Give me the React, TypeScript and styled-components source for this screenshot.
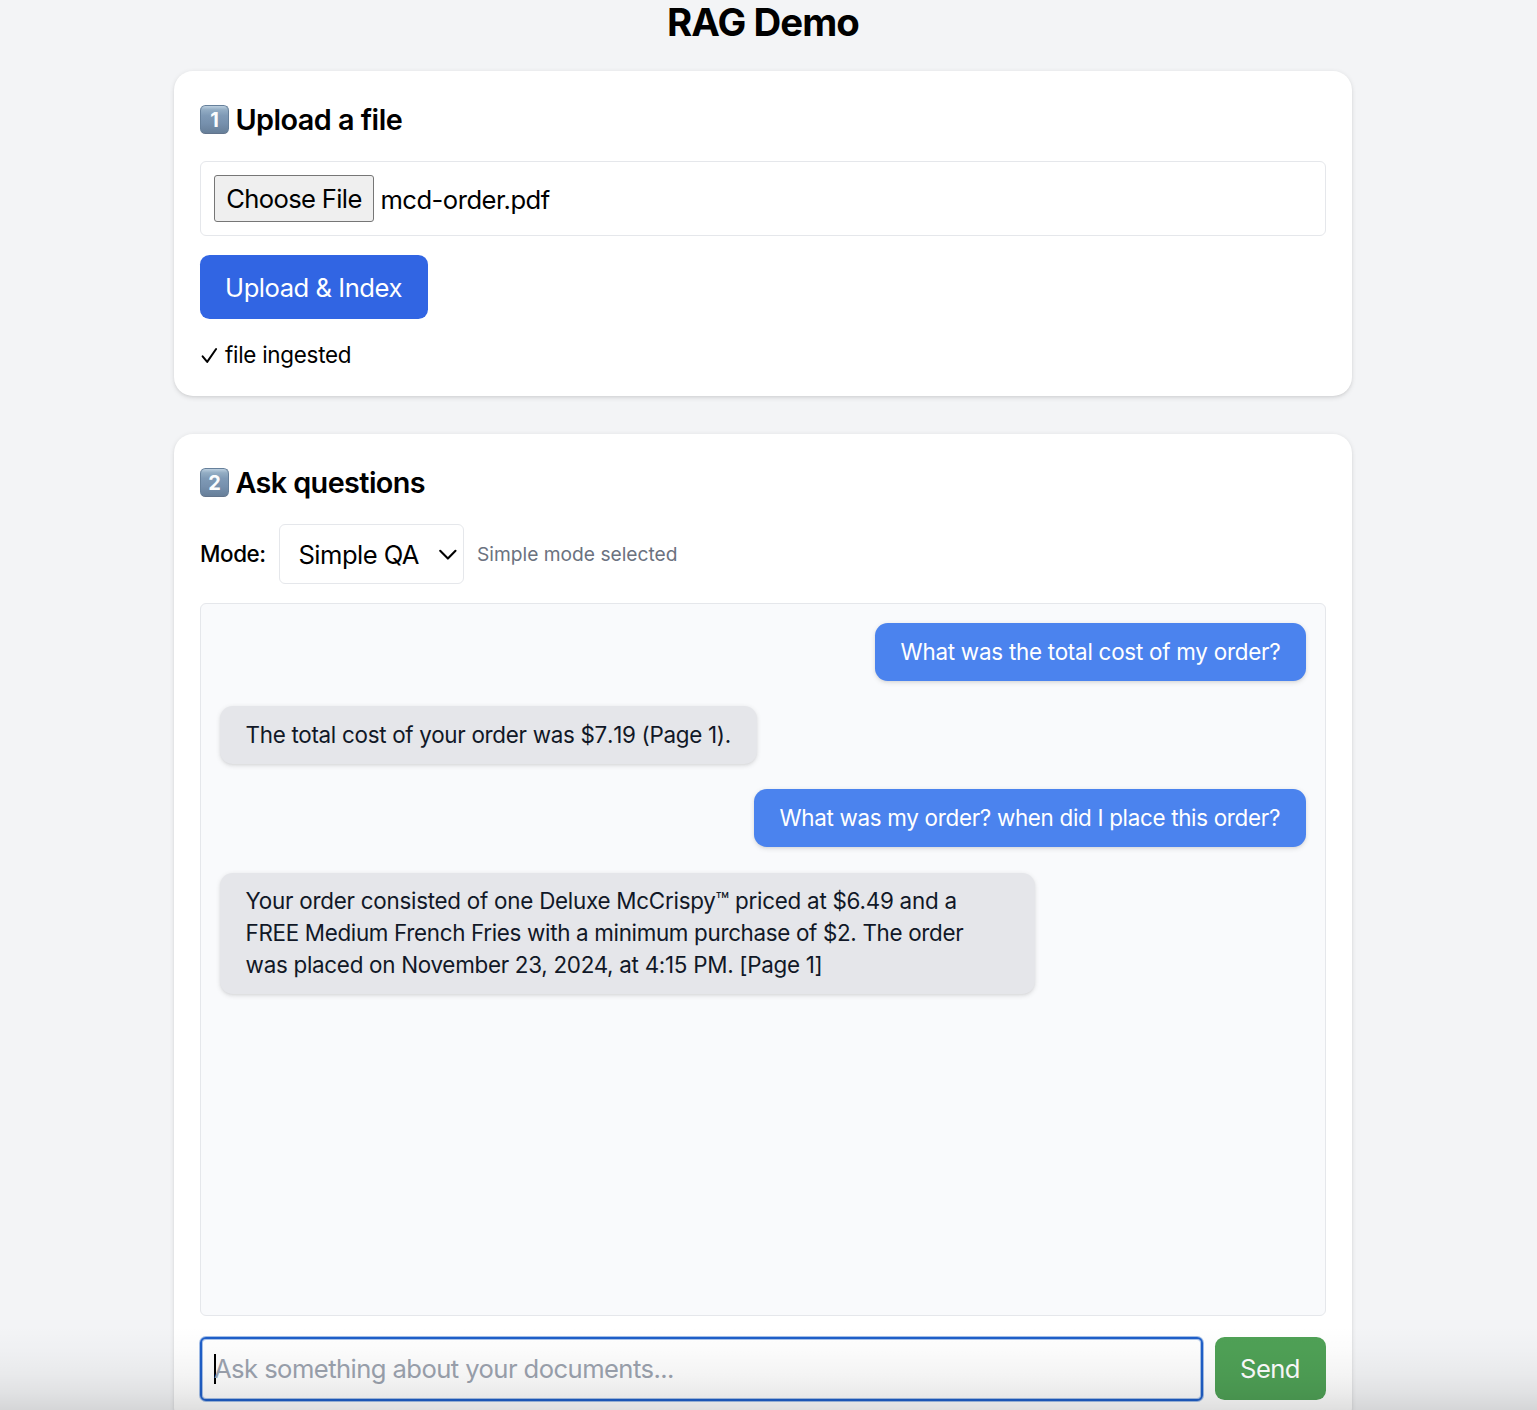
import React from 'react';
import styled, { createGlobalStyle } from 'styled-components';

const GlobalStyle = createGlobalStyle`
  *, *::before, *::after { box-sizing: border-box; }
  html, body { margin: 0; height: 1410px; overflow: hidden; }
  body {
    background: #f3f4f6;
    color: #000;
    font-family: Inter, "Liberation Sans", sans-serif;
    font-size: 25.6px;
    font-kerning: normal;
  }
  h1, h2, p { margin: 0; }
  button { font-family: inherit; }
`;

const Page = styled.main`
  position: relative;
  height: 1410px;
  overflow: hidden;
  padding: 0 185px 0 174px;
  display: flex;
  flex-direction: column;
`;

const Title = styled.h1`
  flex: none;
  height: 71px;
  text-align: center;
  font-size: 38.4px;
  line-height: 44px;
  font-weight: 700;
  letter-spacing: -0.92px;
`;

const Card = styled.section`
  flex: none;
  display: flex;
  flex-direction: column;
  align-items: flex-start;
  padding: 26px;
  border-radius: 19px;
  background: #fff;
  box-shadow: 0 1.6px 4.8px rgba(0, 0, 0, 0.1), 0 1.6px 3.2px -1.6px rgba(0, 0, 0, 0.1);

  & + & { margin-top: 38px; }
`;

const CardHeading = styled.h2<{ $track: number }>`
  display: flex;
  align-items: center;
  gap: 6.4px;
  height: 45px;
  margin-bottom: 19px;
  font-size: 28.8px;
  line-height: 45px;
  font-weight: 600;
  letter-spacing: ${(p) => p.$track}px;
`;

const Keycap = styled.span`
  display: flex;
  align-items: center;
  justify-content: center;
  width: 29px;
  height: 29px;
  margin-bottom: 1px;
  padding-top: 2px;
  border-radius: 5.5px;
  border: 1px solid #66809b;
  border-bottom-color: #62748c;
  background: linear-gradient(#bccfdf 0, #93adc4 14%, #7f9ab6 35%, #7690ad 65%, #677f99 100%);
  color: #fbfcfd;
  font-size: 20px;
  line-height: 1;
  font-weight: 650;
  letter-spacing: 0;
`;

const FileField = styled.div`
  display: flex;
  align-items: center;
  gap: 6.4px;
  width: 100%;
  height: 75px;
  padding: 0 13px;
  margin-bottom: 19px;
  border: 1px solid #e5e7eb;
  border-radius: 6px;
`;

const ChooseButton = styled.button`
  width: 160px;
  height: 47px;
  padding: 0;
  border: 1px solid #767676;
  border-radius: 3px;
  background: #efefef;
  color: #000;
  font-size: 25.6px;
  letter-spacing: -0.66px;
  white-space: nowrap;
`;

const FileName = styled.span`
  padding-top: 2px;
  letter-spacing: -0.5px;
`;

const ActionButton = styled.button<{ $bg: string; $width: number; $height: number; $track: number }>`
  flex: none;
  width: ${(p) => p.$width}px;
  height: ${(p) => p.$height}px;
  padding: 0 1px 0 0;
  border: 0;
  border-radius: 9.6px;
  background: ${(p) => p.$bg};
  color: #fff;
  font-size: 25.6px;
  letter-spacing: ${(p) => p.$track}px;
  white-space: nowrap;
`;

const Status = styled.p`
  display: flex;
  align-items: center;
  gap: 7px;
  height: 32px;
  margin-top: 19px;
  padding: 2px 0 0 1px;
  font-size: 22.4px;
  line-height: 30px;
  letter-spacing: -0.26px;
`;

const ModeRow = styled.div`
  display: flex;
  align-items: center;
  height: 60px;
  margin-bottom: 19px;
`;

const ModeLabel = styled.label`
  width: 79px;
  padding-bottom: 1px;
  font-size: 22.4px;
  font-weight: 500;
  letter-spacing: -0.4px;
`;

const ModeSelect = styled.div`
  display: flex;
  align-items: center;
  justify-content: space-between;
  width: 185px;
  height: 60px;
  padding: 0 6px 0 18.5px;
  border: 1px solid #e5e7eb;
  border-radius: 6px;
  letter-spacing: -0.55px;

  svg { margin-top: 2px; }
`;

const ModeHint = styled.span`
  margin-left: 13px;
  color: #6b7280;
  font-size: 19.2px;
`;

const Chat = styled.div`
  display: flex;
  flex-direction: column;
  align-items: flex-start;
  gap: 25.6px;
  width: 100%;
  height: 713px;
  margin-bottom: 20px;
  padding: 19px;
  border: 1px solid #e5e7eb;
  border-radius: 6px;
  background: #f9fafc;
`;

const Bubble = styled.div<{ $mine?: boolean; $width: number }>`
  align-self: ${(p) => (p.$mine ? 'flex-end' : 'flex-start')};
  width: ${(p) => p.$width}px;
  padding: 12.8px 0 12.8px 25.6px;
  border-radius: 12.8px;
  background: ${(p) => (p.$mine ? '#4b83ee' : '#e5e6ea')};
  color: ${(p) => (p.$mine ? '#fff' : '#111827')};
  font-size: 22.4px;
  line-height: 32px;
  white-space: nowrap;
  box-shadow: 0 1.6px 4.8px rgba(0, 0, 0, 0.1), 0 1.6px 3.2px -1.6px rgba(0, 0, 0, 0.1);
`;

const Line = styled.div<{ $track: number }>`
  letter-spacing: ${(p) => p.$track}px;
`;

const Amount = styled.span`
  font-kerning: none;
`;

const Composer = styled.div`
  display: flex;
  align-items: flex-start;
  gap: 12px;
  width: 100%;
  height: 64px;
  padding-top: 1px;
`;

const MessageField = styled.div`
  flex: 1;
  display: flex;
  align-items: center;
  height: 64px;
  margin-top: -0.5px;
  padding: 0 12px;
  border: 2px solid #1f5fc9;
  border-radius: 6px;
  box-shadow: 0 0 0 1px #a3bfe9, inset 0 0 0 1px #a9c3ea;
  background: #fff;
`;

const Caret = styled.span`
  width: 2px;
  height: 30px;
  margin: 0 -2px 0 0;
  background: #000;
`;

const Placeholder = styled.span`
  color: #9ca3af;
  letter-spacing: -0.56px;
  white-space: nowrap;
`;

const BottomShade = styled.div`
  position: absolute;
  left: 0;
  right: 0;
  bottom: 0;
  height: 84px;
  pointer-events: none;
  background: linear-gradient(
    rgba(0, 0, 0, 0) 0%,
    rgba(0, 0, 0, 0.014) 28%,
    rgba(0, 0, 0, 0.042) 58%,
    rgba(0, 0, 0, 0.078) 80%,
    rgba(0, 0, 0, 0.125) 100%
  );
`;

const Check = () => (
  <svg width="17" height="18" viewBox="0 0 17 18" fill="none">
    <path d="M1.6 10.3 6.2 15.9 15.1 3" stroke="#000" strokeWidth="2" strokeLinecap="round" strokeLinejoin="round" />
  </svg>
);

const Chevron = () => (
  <svg width="19" height="14" viewBox="0 0 19 14" fill="none">
    <path d="M2.2 2.8 9.9 10.6 17.5 2.8" stroke="#000" strokeWidth="2.1" strokeLinecap="round" strokeLinejoin="round" />
  </svg>
);

type Message = { mine?: boolean; width: number; lines: { text: React.ReactNode; track: number }[] };

const messages: Message[] = [
  { mine: true, width: 431, lines: [{ text: 'What was the total cost of my order?', track: -0.246 }] },
  {
    width: 537.4,
    lines: [{ text: <>The total cost of your order was <Amount>$7.19</Amount> (Page 1).</>, track: -0.29 }],
  },
  { mine: true, width: 552, lines: [{ text: 'What was my order? when did I place this order?', track: -0.305 }] },
  {
    width: 815,
    lines: [
      { text: 'Your order consisted of one Deluxe McCrispy™ priced at $6.49 and a', track: -0.25 },
      { text: 'FREE Medium French Fries with a minimum purchase of $2. The order', track: -0.325 },
      { text: 'was placed on November 23, 2024, at 4:15 PM. [Page 1]', track: -0.28 },
    ],
  },
];

export default function App() {
  return (
    <>
      <GlobalStyle />
      <Page>
        <Title>RAG Demo</Title>

        <Card>
          <CardHeading $track={-0.52}>
            <Keycap>1</Keycap>
            Upload a file
          </CardHeading>
          <FileField>
            <ChooseButton>Choose File</ChooseButton>
            <FileName>mcd-order.pdf</FileName>
          </FileField>
          <ActionButton $bg="#3165e3" $width={228} $height={64} $track={-0.47}>Upload &amp; Index</ActionButton>
          <Status>
            <Check />
            file ingested
          </Status>
        </Card>

        <Card>
          <CardHeading $track={-0.59}>
            <Keycap>2</Keycap>
            Ask questions
          </CardHeading>
          <ModeRow>
            <ModeLabel>Mode:</ModeLabel>
            <ModeSelect>
              Simple QA
              <Chevron />
            </ModeSelect>
            <ModeHint>Simple mode selected</ModeHint>
          </ModeRow>
          <Chat>
            {messages.map((message, i) => (
              <Bubble key={i} $mine={message.mine} $width={message.width}>
                {message.lines.map((line, n) => (
                  <Line key={n} $track={line.track}>{line.text}</Line>
                ))}
              </Bubble>
            ))}
          </Chat>
          <Composer>
            <MessageField>
              <Caret />
              <Placeholder>Ask something about your documents...</Placeholder>
            </MessageField>
            <ActionButton $bg="#4fa156" $width={111} $height={63} $track={-0.55}>Send</ActionButton>
          </Composer>
        </Card>

        <BottomShade />
      </Page>
    </>
  );
}
